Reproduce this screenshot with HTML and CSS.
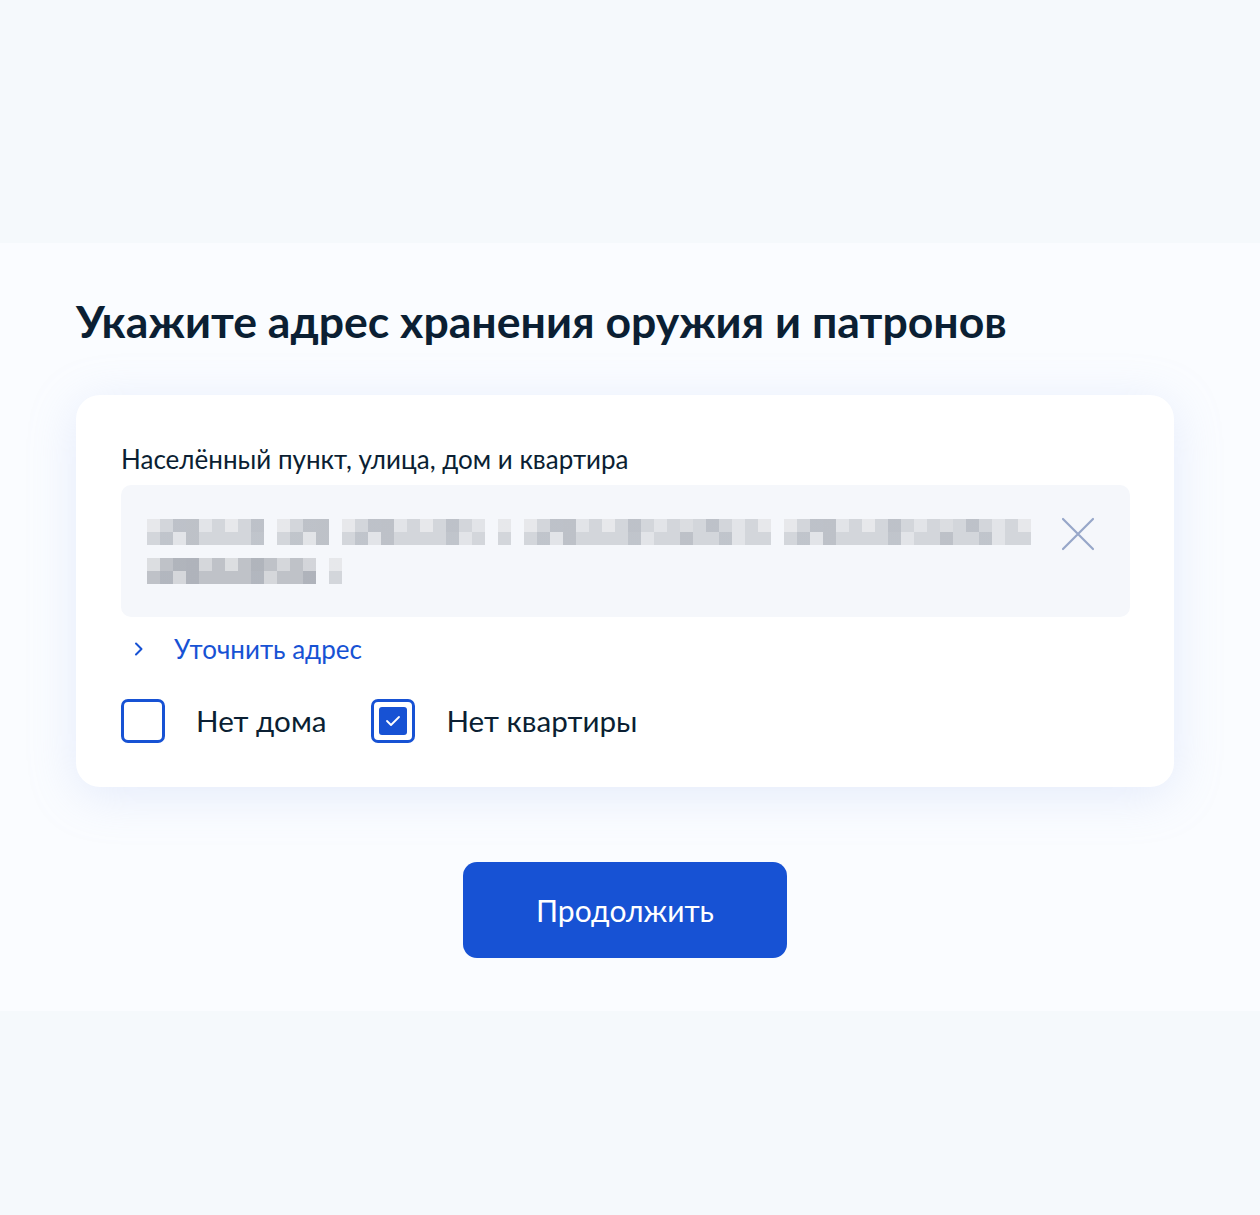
FILE: index.html
```html
<!DOCTYPE html>
<html lang="ru">
<head>
<meta charset="utf-8">
<title>Адрес хранения</title>
<link rel="stylesheet" href="styles.css">
</head>
<body>
<div class="band-top"></div>
<main class="main">
  <h1 class="title">Укажите адрес хранения оружия и патронов</h1>
  <section class="card">
    <div class="label">Населённый пункт, улица, дом и квартира</div>
    <div class="input">
      <div class="value">
        <div class="line">
          <span class="w w1"></span><span class="w w2"></span><span class="w w3"></span><span class="w w4"></span><span class="w w5"></span><span class="w w6"></span>
        </div>
        <div class="line">
          <span class="w w8"></span><span class="w w9"></span>
        </div>
      </div>
      <button class="clear" aria-label="Очистить">
        <svg width="34" height="34" viewBox="0 0 34 34"><path d="M2 2 L32 32 M32 2 L2 32" stroke="#97a7c9" stroke-width="2.2" stroke-linecap="round" fill="none"/></svg>
      </button>
    </div>
    <a class="refine" href="#">
      <svg class="chev" width="12" height="16" viewBox="0 0 12 16"><path d="M3 2.5 L8.5 8 L3 13.5" stroke="#1752d4" stroke-width="2" fill="none" stroke-linecap="round" stroke-linejoin="round"/></svg>
      <span>Уточнить адрес</span>
    </a>
    <div class="checks">
      <label class="check"><span class="box"></span><span class="check-text">Нет дома</span></label>
      <label class="check"><span class="box checked"><span class="fill"><svg width="16" height="12" viewBox="0 0 16 12"><path d="M2 6 L6 10 L14 2" stroke="#fff" stroke-width="1.8" fill="none" stroke-linecap="round" stroke-linejoin="round"/></svg></span></span><span class="check-text">Нет квартиры</span></label>
    </div>
  </section>
  <div class="actions">
    <button class="primary">Продолжить</button>
  </div>
</main>
<div class="band-bottom"></div>
</body>
</html>
```
FILE: styles.css
```css
* { box-sizing: border-box; }
html, body { margin: 0; padding: 0; }
body {
  font-family: Lato, "Noto Sans", sans-serif;
  color: #0b1f33;
  background: #f5f9fc;
}
.band-top { height: 243px; background: #f5f9fc; }
.main {
  background: #fafcff;
  height: 768px;
  padding: 48px 86px 0 76px;
}
.title {
  margin: 0;
  font-size: 44.6px;
  line-height: 60px;
  font-weight: 700;
  color: #0b1f33;
  letter-spacing: 0;
}
.card {
  margin-top: 44px;
  width: 1098px;
  background: #fff;
  border-radius: 24px;
  box-shadow: 0 8px 48px rgba(170, 190, 240, 0.26);
  padding: 48px 44px 44px 45px;
}
.label {
  font-size: 26px;
  line-height: 32px;
  color: #0b1f33;
}
.input {
  margin-top: 10px;
  height: 132px;
  background: #f5f7fb;
  border-radius: 10px;
  display: flex;
  align-items: flex-start;
  justify-content: space-between;
  padding: 21px 35px 0 26px;
}
.value { display: flex; flex-direction: column; gap: 0; }
.line { display: flex; gap: 13px; height: 39px; padding-top: 13px; }
.w {
  display: block;
  height: 26px;
  background:
    linear-gradient(90deg, rgba(255,255,255,0.45) 0 13px, transparent 13px 26px, rgba(150,156,166,0.35) 26px 39px, transparent 39px 52px, rgba(255,255,255,0.35) 52px 65px, transparent 65px) 0 0 / 78px 13px repeat-x,
    linear-gradient(90deg, transparent 0 13px, rgba(150,158,168,0.3) 13px 26px, rgba(255,255,255,0.35) 26px 39px, transparent 39px) 0 13px / 91px 13px repeat-x,
    linear-gradient(90deg, transparent 0 39px, rgba(140,146,156,0.3) 39px 52px, transparent 52px) 0 0 / 117px 26px repeat-x,
    #d3d6db;
}
.w1 { width: 117px; }
.w2 { width: 52px; }
.w3 { width: 143px; }
.w4 { width: 13px; }
.w5 { width: 247px; }
.w6 { width: 247px; }
.w8 { width: 169px; background-color: #bfc2c8; }
.w9 { width: 13px; }
.clear {
  border: 0;
  background: transparent;
  padding: 0;
  margin-top: 11px;
  width: 34px;
  height: 34px;
  cursor: pointer;
}
.refine {
  display: flex;
  align-items: center;
  gap: 29px;
  margin-top: 16px;
  padding-left: 12px;
  color: #1752d4;
  text-decoration: none;
  font-size: 26px;
  line-height: 32px;
}
.chev { display: block; }
.checks {
  display: flex;
  gap: 45px;
  margin-top: 34px;
}
.check {
  display: flex;
  align-items: center;
  gap: 31px;
  font-size: 29.6px;
  line-height: 44px;
  color: #0b1f33;
}
.box {
  width: 44px;
  height: 44px;
  border: 3px solid #1752d4;
  border-radius: 7px;
  display: flex;
  align-items: center;
  justify-content: center;
}
.fill {
  width: 28px;
  height: 28px;
  border-radius: 3px;
  background: #1752d4;
  display: flex;
  align-items: center;
  justify-content: center;
}
.fill svg { display: block; }
.actions {
  width: 1098px;
  display: flex;
  justify-content: center;
  margin-top: 75px;
}
.primary {
  width: 324px;
  height: 96px;
  border: 0;
  border-radius: 14px;
  background: #1752d4;
  color: #fff;
  font-family: Lato, "Noto Sans", sans-serif;
  font-size: 30px;
  cursor: pointer;
}
.band-bottom { height: 204px; background: #f5f9fc; }
```
